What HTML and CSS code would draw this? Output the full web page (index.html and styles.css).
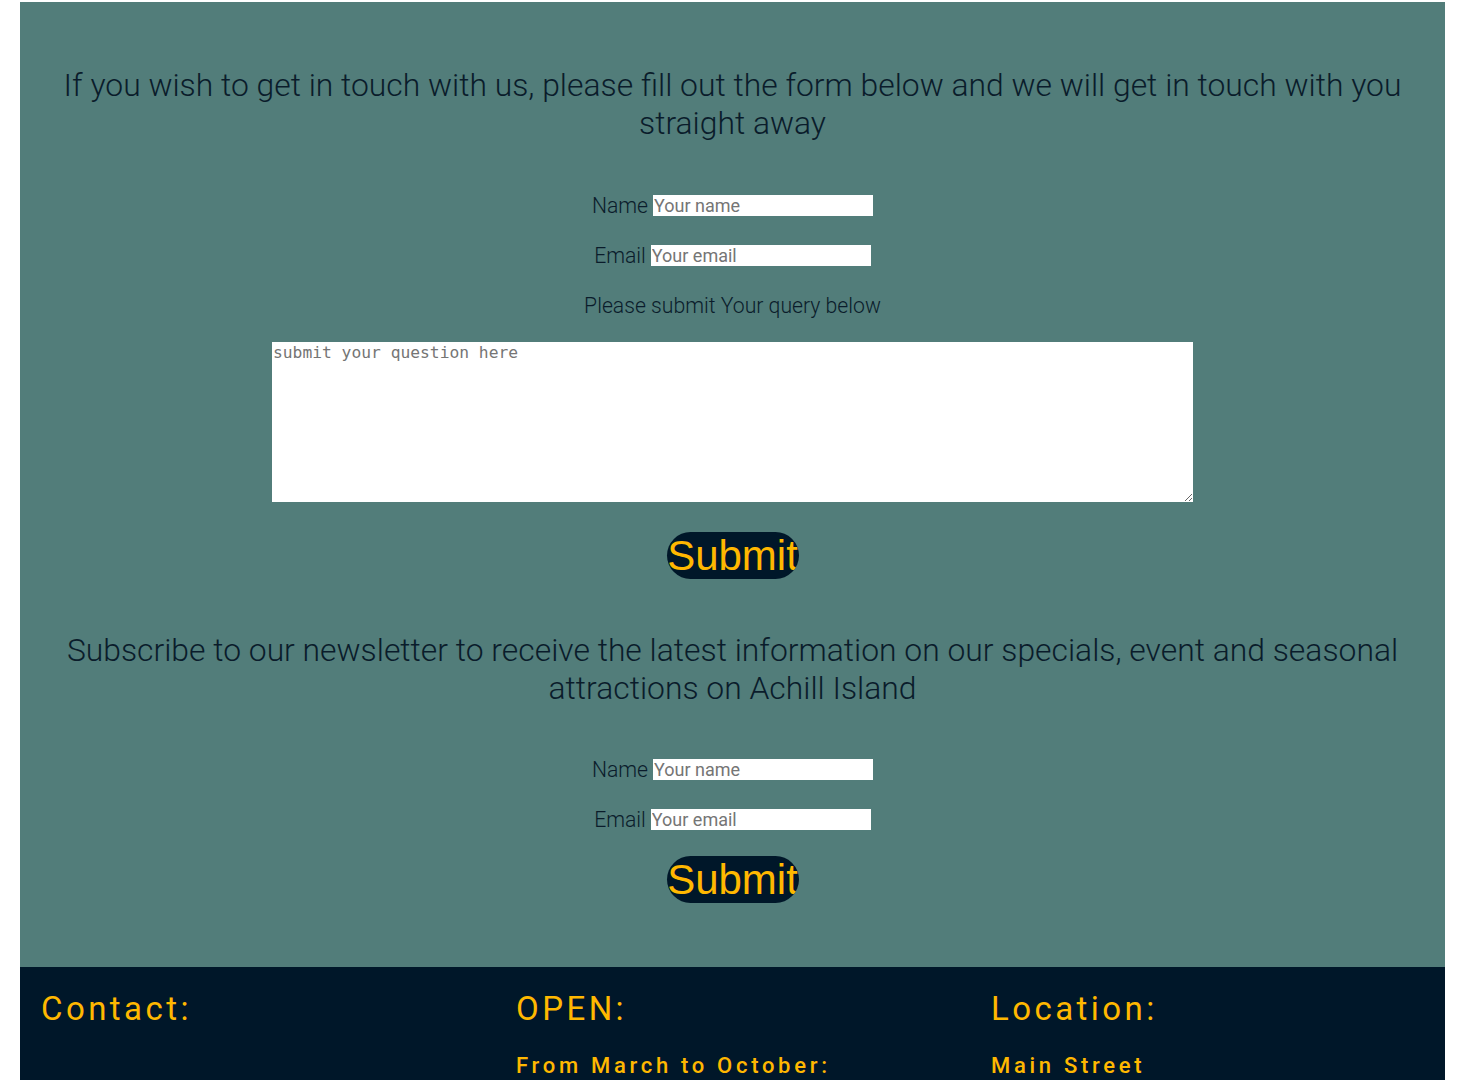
FILE: index.html
```html
<!DOCTYPE html>
<html lang="en">
<head>
<meta charset="utf-8">
<title>Contact</title>
<link rel="stylesheet" href="styles.css">
</head>
<body>
<div class="page">
  <main class="panel">
    <h2 class="heading heading-first">If you wish to get in touch with us, please fill out the form below and we will get in touch with you straight away</h2>
    <form class="form">
      <div class="row"><label class="label" for="n1">Name</label> <input class="field" id="n1" type="text" placeholder="Your name"></div>
      <div class="row"><label class="label" for="e1">Email</label> <input class="field" id="e1" type="email" placeholder="Your email"></div>
      <p class="row label">Please submit Your query below</p>
      <textarea class="query" placeholder="submit your question here"></textarea>
      <button class="submit submit-first" type="button">Submit</button>
    </form>
    <h2 class="heading heading-second">Subscribe to our newsletter to receive the latest information on our specials, event and seasonal attractions on Achill Island</h2>
    <form class="form">
      <div class="row"><label class="label" for="n2">Name</label> <input class="field" id="n2" type="text" placeholder="Your name"></div>
      <div class="row"><label class="label" for="e2">Email</label> <input class="field" id="e2" type="email" placeholder="Your email"></div>
      <button class="submit submit-second" type="button">Submit</button>
    </form>
  </main>
  <footer class="footer">
    <div class="col">
      <h3 class="col-title">Contact:</h3>
    </div>
    <div class="col">
      <h3 class="col-title">OPEN:</h3>
      <p class="col-text">From March to October:</p>
    </div>
    <div class="col">
      <h3 class="col-title">Location:</h3>
      <p class="col-text">Main Street</p>
    </div>
  </footer>
</div>
</body>
</html>
```

FILE: styles.css
```css
html, body {
  margin: 0;
  padding: 0;
  background: #ffffff;
  overflow: hidden;
}

body {
  font-family: Roboto, "Liberation Sans", sans-serif;
}

.page {
  margin: 2px 0 0 20px;
  width: 1425px;
}

.panel {
  background: #527d7a;
  padding: 64px 40px 64px;
  display: flex;
  flex-direction: column;
  align-items: center;
}

.heading {
  margin: 0;
  font-weight: 300;
  font-size: 31.85px;
  line-height: 38px;
  color: #0a1c2b;
  text-align: center;
}

.form {
  display: flex;
  flex-direction: column;
  align-items: center;
}

.heading-first + .form {
  margin-top: 52px;
}

.row {
  display: flex;
  align-items: center;
  justify-content: center;
  height: 22px;
  margin: 0 0 28px;
}

p.row {
  margin: 0 0 26px;
}

.label {
  font-weight: 300;
  font-size: 21.2px;
  color: #0a1c2b;
}

.field {
  margin-left: 5px;
  width: 220px;
  height: 21px;
  box-sizing: border-box;
  border: none;
  padding: 0 1px;
  background: #ffffff;
  font-family: Roboto, "Liberation Sans", sans-serif;
  font-weight: 400;
  font-size: 18px;
  color: #222;
  outline: none;
}

.field::placeholder {
  color: #757575;
}

.query {
  width: 921px;
  height: 160px;
  box-sizing: border-box;
  border: none;
  padding: 1px 1px;
  margin: 0;
  background: #ffffff;
  font-family: "DejaVu Sans Mono", "Liberation Mono", monospace;
  font-size: 16.3px;
  color: #222;
  resize: both;
  outline: none;
}

.query::placeholder {
  color: #757575;
}

.submit {
  width: 132px;
  height: 47px;
  padding: 0;
  border: none;
  border-radius: 24px;
  background: #001729;
  color: #ffb800;
  font-family: "Liberation Sans", Arial, sans-serif;
  font-size: 42px;
  line-height: 47px;
  overflow: hidden;
  white-space: nowrap;
  text-align: center;
}

.submit-first {
  margin-top: 30px;
}

.heading-second {
  margin-top: 52px;
}

.heading-second + .form {
  margin-top: 51px;
}

.submit-second {
  margin-top: -2px;
}

.footer {
  background: #001729;
  display: grid;
  grid-template-columns: repeat(3, 1fr);
  height: 140px;
}

.col {
  padding: 22px 21px 0;
}

.col-title {
  margin: 0;
  font-weight: 400;
  font-size: 33px;
  line-height: 40px;
  letter-spacing: 3.45px;
  color: #ffb800;
}

.col-text {
  margin: 24px 0 0;
  font-weight: 500;
  font-size: 22px;
  line-height: 26px;
  letter-spacing: 3.7px;
  color: #ffb800;
}
```
